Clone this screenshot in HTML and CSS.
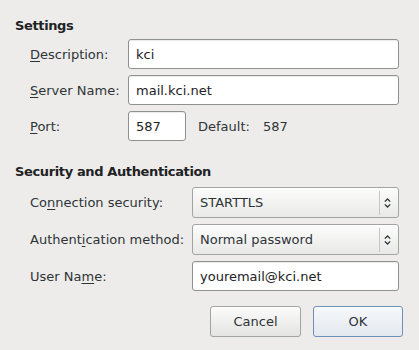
FILE: index.html
```html
<!DOCTYPE html>
<html lang="en">
<head>
    <meta charset="UTF-8">
    <title>Account Settings</title>
    <link rel="stylesheet" href="styles.css">
</head>
<body>
<div class="dialog">
    <h2 class="section-title">Settings</h2>
    <div class="field-grid server-grid">
        <label for="description"><u>D</u>escription:</label>
        <input type="text" id="description" value="kci">
        <label for="serverName"><u>S</u>erver Name:</label>
        <input type="text" id="serverName" value="mail.kci.net">
        <label for="port"><u>P</u>ort:</label>
        <div class="port-row">
            <input type="text" id="port" class="port-input" value="587">
            <span class="default-label">Default:</span>
            <span class="default-value">587</span>
        </div>
    </div>

    <h2 class="section-title security-title">Security and Authentication</h2>
    <div class="field-grid security-grid">
        <label for="connSecurity">Co<u>n</u>nection security:</label>
        <div class="combo" id="connSecurity">
            <span class="combo-text">STARTTLS</span>
            <span class="combo-arrow">
                <svg width="7" height="10" viewBox="0 0 7 10"><path d="M0.8 3.6 L3.5 1 L6.2 3.6 M0.8 6.4 L3.5 9 L6.2 6.4" fill="none" stroke="#2e3436" stroke-width="1.3"/></svg>
            </span>
        </div>
        <label for="authMethod">Authent<u>i</u>cation method:</label>
        <div class="combo" id="authMethod">
            <span class="combo-text">Normal password</span>
            <span class="combo-arrow">
                <svg width="7" height="10" viewBox="0 0 7 10"><path d="M0.8 3.6 L3.5 1 L6.2 3.6 M0.8 6.4 L3.5 9 L6.2 6.4" fill="none" stroke="#2e3436" stroke-width="1.3"/></svg>
            </span>
        </div>
        <label for="userName">User Na<u>m</u>e:</label>
        <input type="text" id="userName" value="youremail@kci.net">
    </div>

    <div class="button-row">
        <button type="button" class="btn">Cancel</button>
        <button type="button" class="btn btn-default">OK</button>
    </div>
</div>
</body>
</html>
```

FILE: styles.css
```css
body { margin: 0; background: #edeceb; color: #2e3436; font-family: "DejaVu Sans", sans-serif; font-size: 13px; }
.dialog { padding: 18px 20px 0 15px; }
.section-title { margin: 0; font-size: 13px; font-weight: bold; line-height: 16px; letter-spacing: -0.37px; color: #1e2224; }
.security-title { margin-top: 23px; }
.field-grid { display: grid; row-gap: 6px; align-items: center; padding-left: 15px; }
.server-grid { grid-template-columns: 98px 1fr; margin-top: 5px; grid-auto-rows: 30px; }
.security-grid { grid-template-columns: 162px 1fr; margin-top: 7px; }
.field-grid label { white-space: nowrap; }
.field-grid u { text-underline-offset: 2px; }
input { box-sizing: border-box; height: 30px; width: 100%; margin: 0; padding: 0 7px; font: inherit; color: #1e2224; background: #fff; border: 1px solid #8f9191; border-radius: 3px; box-shadow: inset 0 1px 1px rgba(0,0,0,0.08); outline: none; }
.port-row { display: flex; align-items: center; }
.port-input { width: 58px; }
.default-label { margin-left: 12px; }
.default-value { margin-left: 13px; }
.combo { box-sizing: border-box; height: 31px; display: flex; align-items: center; border: 1px solid #a2a3a3; border-radius: 3px; background: linear-gradient(#fcfcfc, #e9e9e8); box-shadow: inset 0 1px 0 #fff; }
.combo-text { flex: 1; padding-left: 7px; }
.combo-arrow { display: flex; align-items: center; height: 24px; padding: 0 7px 0 4px; border-left: 1px solid #c6c6c5; }
.button-row { display: flex; justify-content: flex-end; gap: 12px; margin-top: 15px; margin-right: -4px; }
.btn { box-sizing: border-box; width: 91px; height: 31px; font: inherit; color: #2e3436; border: 1px solid #a2a3a3; border-radius: 3px; background: linear-gradient(#fbfbfb, #e4e4e3); box-shadow: inset 0 1px 0 #fff; padding: 0; }
.btn-default { width: 90px; border-color: #6f8fb8; background: linear-gradient(#f6f8fb, #e3e8ef); }
```
